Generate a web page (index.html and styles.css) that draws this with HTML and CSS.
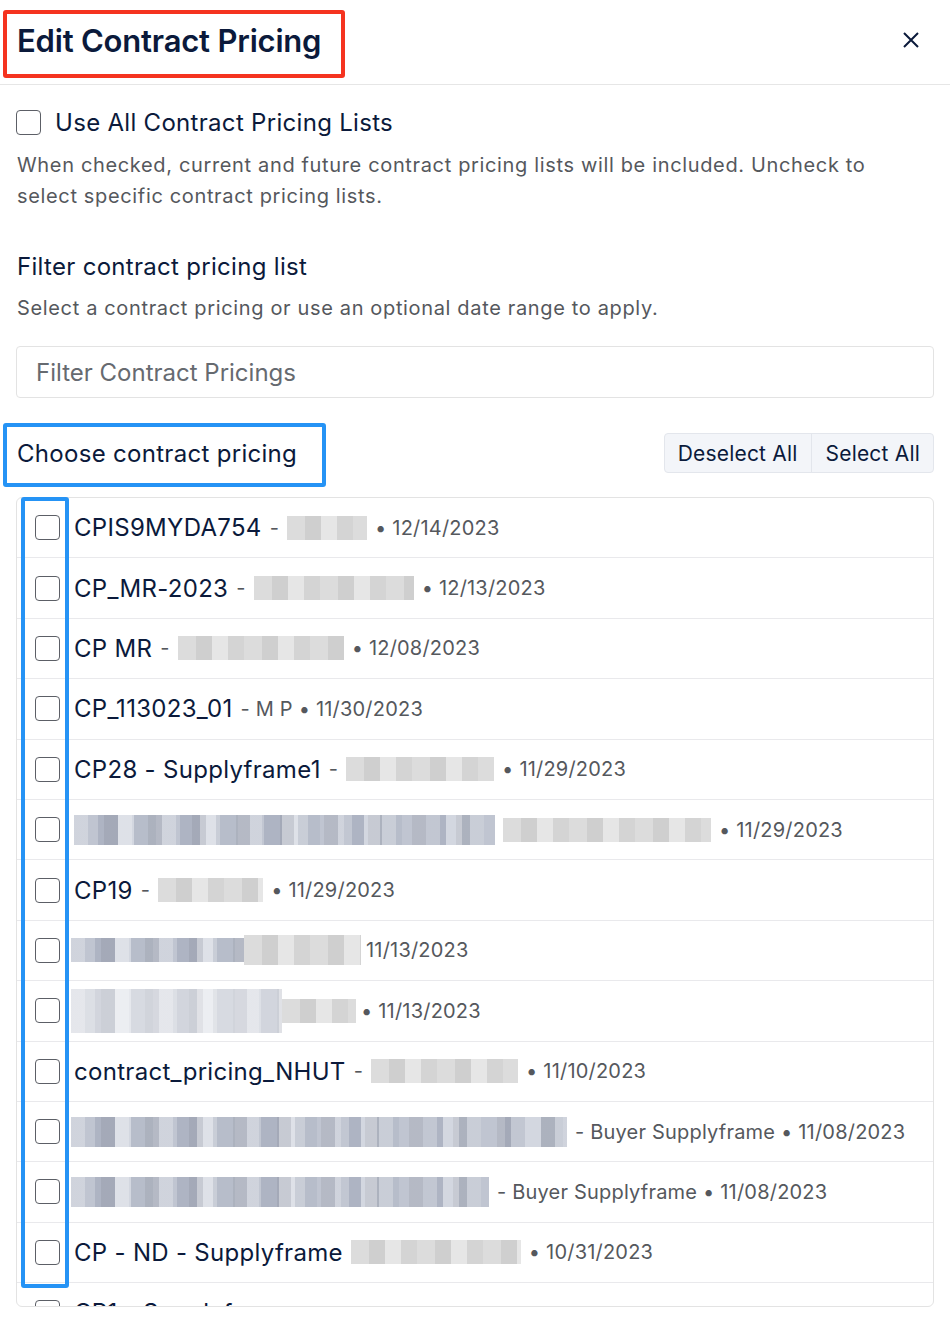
FILE: index.html
```html
<!DOCTYPE html>
<html lang="en">
<head>
    <meta charset="UTF-8">
    <meta name="viewport" content="width=device-width, initial-scale=1.0">
    <title>Edit Contract Pricing</title>
    <link rel="stylesheet" href="styles.css">
</head>
<body>

    <header class="modal-header">
        <h1 class="modal-title">Edit Contract Pricing</h1>
        <button class="close-btn" aria-label="Close">
            <svg width="18" height="18" viewBox="0 0 18 18"><path d="M2 2 L16 16 M16 2 L2 16" stroke="#0b1a3b" stroke-width="2" fill="none"/></svg>
        </button>
    </header>

    <main class="modal-body">
        <label class="use-all">
            <span class="box"></span>
            <span>Use All Contract Pricing Lists</span>
        </label>
        <p class="hint">When checked, current and future contract pricing lists will be included. Uncheck to select specific contract pricing lists.</p>

        <h2 class="section-title">Filter contract pricing list</h2>
        <p class="hint">Select a contract pricing or use an optional date range to apply.</p>

        <div class="filter-input">Filter Contract Pricings</div>

        <div class="choose-bar">
            <h2 class="section-title">Choose contract pricing</h2>
            <div class="btn-group">
                <button>Deselect All</button>
                <button>Select All</button>
            </div>
        </div>

        <div class="pricing-list">
            <div class="row"><span class="box"></span><span class="name">CPIS9MYDA754</span><span class="meta">-</span><span class="blur grey" style="width:80px"></span><span class="meta">• 12/14/2023</span></div>
            <div class="row"><span class="box"></span><span class="name">CP_MR-2023</span><span class="meta">-</span><span class="blur grey" style="width:160px"></span><span class="meta">• 12/13/2023</span></div>
            <div class="row"><span class="box"></span><span class="name">CP MR</span><span class="meta">-</span><span class="blur grey" style="width:166px"></span><span class="meta">• 12/08/2023</span></div>
            <div class="row"><span class="box"></span><span class="name">CP_113023_01</span><span class="meta">- M P • 11/30/2023</span></div>
            <div class="row"><span class="box"></span><span class="name">CP28 - Supplyframe1</span><span class="meta">-</span><span class="blur grey" style="width:148px"></span><span class="meta">• 11/29/2023</span></div>
            <div class="row"><span class="box"></span><span class="blur navy tall" style="width:421px"></span><span class="blur grey" style="width:208px"></span><span class="meta">• 11/29/2023</span></div>
            <div class="row"><span class="box"></span><span class="name">CP19</span><span class="meta">-</span><span class="blur grey" style="width:105px"></span><span class="meta">• 11/29/2023</span></div>
            <div class="row"><span class="box"></span><span class="blur navy edge" style="width:173px"></span><span class="blur grey tall flush" style="width:117px"></span><span class="meta">11/13/2023</span></div>
            <div class="row"><span class="box"></span><span class="blur navy tall edge light" style="width:211px"></span><span class="blur grey flush" style="width:74px"></span><span class="meta">• 11/13/2023</span></div>
            <div class="row"><span class="box"></span><span class="name">contract_pricing_NHUT</span><span class="meta">-</span><span class="blur grey" style="width:147px"></span><span class="meta">• 11/10/2023</span></div>
            <div class="row"><span class="box"></span><span class="blur navy tall edge" style="width:496px"></span><span class="meta">- Buyer Supplyframe • 11/08/2023</span></div>
            <div class="row"><span class="box"></span><span class="blur navy tall edge" style="width:418px"></span><span class="meta">- Buyer Supplyframe • 11/08/2023</span></div>
            <div class="row"><span class="box"></span><span class="name">CP - ND - Supplyframe</span><span class="blur grey" style="width:170px"></span><span class="meta">• 10/31/2023</span></div>
            <div class="row"><span class="box"></span><span class="name">CP1 - Supplyframe</span></div>
        </div>
    </main>

    <!-- annotation boxes drawn over the screenshot -->
    <div class="mark red title-mark"></div>
    <div class="mark blue choose-mark"></div>
    <div class="mark blue column-mark"></div>

</body>
</html>
```

FILE: styles.css
```css
* {
    box-sizing: border-box;
}

body {
    margin: 0;
    width: 950px;
    height: 1326px;
    overflow: hidden;
    position: relative;
    background: #fff;
    font-family: Inter, "Noto Sans", sans-serif;
    color: #0b1a3b;
}

.modal-header {
    height: 85px;
    display: flex;
    align-items: center;
    justify-content: space-between;
    padding: 0 30px 4px 17px;
    border-bottom: 1px solid #e6e6e6;
}

.modal-title {
    margin: 0;
    font-size: 31px;
    font-weight: 600;
    letter-spacing: -0.2px;
}

.close-btn {
    border: none;
    background: none;
    padding: 0;
    display: flex;
}

.modal-body {
    padding: 24px 16px 0 16px;
}

.box {
    flex: none;
    width: 25px;
    height: 25px;
    border: 1.5px solid #5c5f66;
    border-radius: 4px;
    background: #fff;
}

.use-all {
    display: flex;
    align-items: center;
    gap: 14px;
    font-size: 24px;
    height: 26px;
    letter-spacing: 0.3px;
}

.hint {
    margin: 15px 0 0 1px;
    max-width: 900px;
    font-size: 20px;
    line-height: 31px;
    color: #55585d;
    letter-spacing: 0.65px;
}

.section-title {
    margin: 40px 0 0 1px;
    font-size: 24px;
    font-weight: 400;
    letter-spacing: 0.3px;
}

.modal-body .section-title + .hint {
    margin-top: 12px;
}

.filter-input {
    margin-top: 22px;
    height: 52px;
    border: 1px solid #e3e3e3;
    border-radius: 4px;
    padding: 0 19px;
    display: flex;
    align-items: center;
    font-size: 24px;
    color: #666a70;
}

.choose-bar {
    margin-top: 35px;
    display: flex;
    align-items: center;
    justify-content: space-between;
    height: 40px;
}

.choose-bar .section-title {
    margin: 0 0 0 1px;
}

.btn-group {
    display: flex;
    border: 1px solid #e3e6ec;
    border-radius: 4px;
    background: #f3f5f9;
}

.btn-group button {
    font-family: inherit;
    font-size: 21px;
    letter-spacing: 0.2px;
    color: #0b1a3b;
    background: none;
    border: none;
    padding: 0 13px;
    height: 38px;
}

.btn-group button + button {
    border-left: 1px solid #e3e6ec;
    padding: 0 13px 0 14px;
}

.pricing-list {
    margin-top: 24px;
    height: 810px;
    overflow: hidden;
    border: 1px solid #e3e3e3;
    border-radius: 6px;
}

.row {
    height: 60.4px;
    display: flex;
    align-items: center;
    padding-left: 18px;
    border-bottom: 1px solid #e9e9ec;
    white-space: nowrap;
}

.row .box {
    margin-right: 14px;
}

.name {
    font-size: 24px;
    margin-right: 8px;
    letter-spacing: 0.3px;
}

.meta {
    font-size: 20px;
    color: #55585d;
    margin-right: 8px;
    letter-spacing: 0.2px;
}

.blur {
    flex: none;
    height: 24px;
    margin-right: 8px;
}

.blur.grey {
    background: repeating-linear-gradient(90deg, #dcdcdc 0 18px, #cfcfcf 18px 34px, #e6e6e6 34px 50px, #d4d4d4 50px 66px);
}

.blur.navy {
    background:
        repeating-linear-gradient(90deg, rgba(255,255,255,0.25) 0 14px, rgba(255,255,255,0) 14px 30px, rgba(0,0,0,0.06) 30px 44px),
        repeating-linear-gradient(90deg, #c0c5d1 0 24px, #aeb4c3 24px 44px, #d3d7e0 44px 60px, #b7bdca 60px 82px);
}

.blur.tall {
    height: 30px;
}

.blur.light {
    height: 44px;
    opacity: 0.55;
}

.blur.edge {
    margin-left: -3px;
}

.blur.flush {
    margin-left: -8px;
    margin-right: 5px;
}

.mark {
    position: absolute;
    border: 4px solid;
    border-radius: 3px;
}

.mark.red {
    border-color: #f5331f;
}

.mark.blue {
    border-color: #2593f5;
}

.title-mark {
    left: 3px;
    top: 10px;
    width: 342px;
    height: 68px;
}

.choose-mark {
    left: 3px;
    top: 423px;
    width: 323px;
    height: 64px;
}

.column-mark {
    left: 21px;
    top: 497px;
    width: 48px;
    height: 791px;
}
```
